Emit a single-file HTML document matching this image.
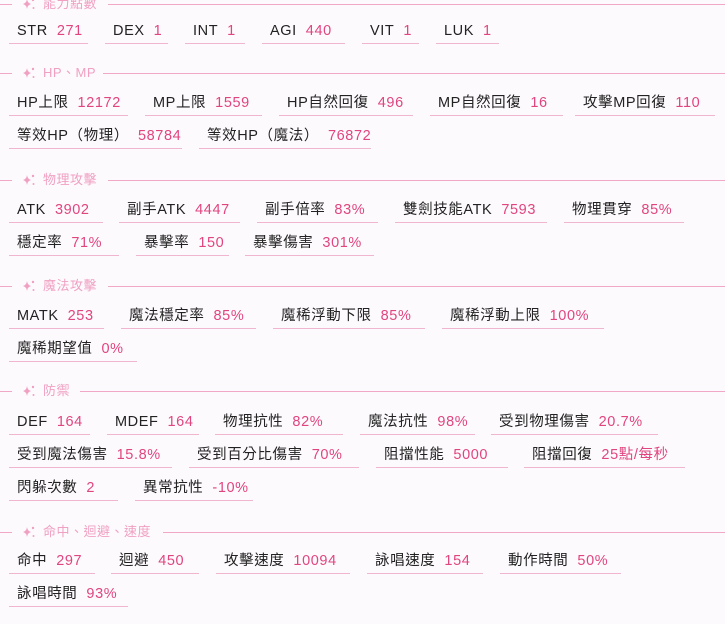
<!DOCTYPE html>
<html><head><meta charset="utf-8">
<style>
body{margin:0;width:725px;height:624px;background:#fdfafd;position:relative;overflow:hidden;font-family:"Liberation Sans","Noto Sans CJK TC",sans-serif;}
.i{position:absolute;height:24px;border-bottom:1px solid #f1b6cf;padding-left:8px;box-sizing:border-box;line-height:22px;font-size:14.5px;white-space:nowrap;color:#222;letter-spacing:.6px}
.i b{font-weight:normal;color:#e0457f;margin-left:9px}
.h{position:absolute;left:0;width:725px;height:1px}
.h .l1{position:absolute;left:0;top:0;width:12px;height:1px;background:#f0a8c6}
.h .l2{position:absolute;top:0;right:0;height:1px;background:#f0a8c6}
.h .ic{position:absolute;left:22px;top:-7px;width:14px;height:14px}
.h .t{position:absolute;left:43px;top:-9px;font-size:13px;line-height:18px;color:#f0a0c2;white-space:nowrap;letter-spacing:.5px}
</style></head><body>

<div class="h" style="top:4px"><div class="l1"></div><svg class="ic" viewBox="0 0 14 14"><path d="M5 2 Q5.5 6 9 7 Q5.5 8 5 12 Q4.5 8 1 7 Q4.5 6 5 2Z" fill="#f0a0c2"/><circle cx="11" cy="3" r="1.2" fill="#f0a0c2"/><circle cx="11.5" cy="11" r="1" fill="#f0a0c2"/></svg><div class="t">能力點數</div><div class="l2" style="left:108px"></div></div>
<div class="i" style="left:9px;top:20px;width:79px">STR<b>271</b></div>
<div class="i" style="left:105px;top:20px;width:63px">DEX<b>1</b></div>
<div class="i" style="left:185px;top:20px;width:60px">INT<b>1</b></div>
<div class="i" style="left:262px;top:20px;width:83px">AGI<b>440</b></div>
<div class="i" style="left:362px;top:20px;width:57px">VIT<b>1</b></div>
<div class="i" style="left:436px;top:20px;width:63px">LUK<b>1</b></div>

<div class="h" style="top:73px"><div class="l1"></div><svg class="ic" viewBox="0 0 14 14"><path d="M5 2 Q5.5 6 9 7 Q5.5 8 5 12 Q4.5 8 1 7 Q4.5 6 5 2Z" fill="#f0a0c2"/><circle cx="11" cy="3" r="1.2" fill="#f0a0c2"/><circle cx="11.5" cy="11" r="1" fill="#f0a0c2"/></svg><div class="t">HP、MP</div><div class="l2" style="left:103px"></div></div>
<div class="i" style="left:9px;top:92px;width:119px">HP上限<b>12172</b></div>
<div class="i" style="left:145px;top:92px;width:117px">MP上限<b>1559</b></div>
<div class="i" style="left:279px;top:92px;width:134px">HP自然回復<b>496</b></div>
<div class="i" style="left:430px;top:92px;width:133px">MP自然回復<b>16</b></div>
<div class="i" style="left:575px;top:92px;width:140px">攻擊MP回復<b>110</b></div>
<div class="i" style="left:9px;top:125px;width:173px">等效HP（物理）<b>58784</b></div>
<div class="i" style="left:199px;top:125px;width:172px">等效HP（魔法）<b>76872</b></div>

<div class="h" style="top:180px"><div class="l1"></div><svg class="ic" viewBox="0 0 14 14"><path d="M5 2 Q5.5 6 9 7 Q5.5 8 5 12 Q4.5 8 1 7 Q4.5 6 5 2Z" fill="#f0a0c2"/><circle cx="11" cy="3" r="1.2" fill="#f0a0c2"/><circle cx="11.5" cy="11" r="1" fill="#f0a0c2"/></svg><div class="t">物理攻擊</div><div class="l2" style="left:108px"></div></div>
<div class="i" style="left:9px;top:199px;width:94px">ATK<b>3902</b></div>
<div class="i" style="left:119px;top:199px;width:121px">副手ATK<b>4447</b></div>
<div class="i" style="left:257px;top:199px;width:121px">副手倍率<b>83%</b></div>
<div class="i" style="left:395px;top:199px;width:152px">雙劍技能ATK<b>7593</b></div>
<div class="i" style="left:564px;top:199px;width:120px">物理貫穿<b>85%</b></div>
<div class="i" style="left:9px;top:232px;width:110px">穩定率<b>71%</b></div>
<div class="i" style="left:136px;top:232px;width:93px">暴擊率<b>150</b></div>
<div class="i" style="left:245px;top:232px;width:129px">暴擊傷害<b>301%</b></div>

<div class="h" style="top:286px"><div class="l1"></div><svg class="ic" viewBox="0 0 14 14"><path d="M5 2 Q5.5 6 9 7 Q5.5 8 5 12 Q4.5 8 1 7 Q4.5 6 5 2Z" fill="#f0a0c2"/><circle cx="11" cy="3" r="1.2" fill="#f0a0c2"/><circle cx="11.5" cy="11" r="1" fill="#f0a0c2"/></svg><div class="t">魔法攻擊</div><div class="l2" style="left:108px"></div></div>
<div class="i" style="left:9px;top:305px;width:95px">MATK<b>253</b></div>
<div class="i" style="left:121px;top:305px;width:135px">魔法穩定率<b>85%</b></div>
<div class="i" style="left:273px;top:305px;width:152px">魔稀浮動下限<b>85%</b></div>
<div class="i" style="left:442px;top:305px;width:162px">魔稀浮動上限<b>100%</b></div>
<div class="i" style="left:9px;top:338px;width:128px">魔稀期望值<b>0%</b></div>

<div class="h" style="top:391px"><div class="l1"></div><svg class="ic" viewBox="0 0 14 14"><path d="M5 2 Q5.5 6 9 7 Q5.5 8 5 12 Q4.5 8 1 7 Q4.5 6 5 2Z" fill="#f0a0c2"/><circle cx="11" cy="3" r="1.2" fill="#f0a0c2"/><circle cx="11.5" cy="11" r="1" fill="#f0a0c2"/></svg><div class="t">防禦</div><div class="l2" style="left:80px"></div></div>
<div class="i" style="left:9px;top:411px;width:81px">DEF<b>164</b></div>
<div class="i" style="left:107px;top:411px;width:92px">MDEF<b>164</b></div>
<div class="i" style="left:215px;top:411px;width:128px">物理抗性<b>82%</b></div>
<div class="i" style="left:360px;top:411px;width:115px">魔法抗性<b>98%</b></div>
<div class="i" style="left:491px;top:411px;width:167px">受到物理傷害<b>20.7%</b></div>
<div class="i" style="left:9px;top:444px;width:163px">受到魔法傷害<b>15.8%</b></div>
<div class="i" style="left:189px;top:444px;width:170px">受到百分比傷害<b>70%</b></div>
<div class="i" style="left:376px;top:444px;width:132px">阻擋性能<b>5000</b></div>
<div class="i" style="left:524px;top:444px;width:161px">阻擋回復<b>25點/每秒</b></div>
<div class="i" style="left:9px;top:477px;width:109px">閃躲次數<b>2</b></div>
<div class="i" style="left:135px;top:477px;width:118px">異常抗性<b>-10%</b></div>

<div class="h" style="top:532px"><div class="l1"></div><svg class="ic" viewBox="0 0 14 14"><path d="M5 2 Q5.5 6 9 7 Q5.5 8 5 12 Q4.5 8 1 7 Q4.5 6 5 2Z" fill="#f0a0c2"/><circle cx="11" cy="3" r="1.2" fill="#f0a0c2"/><circle cx="11.5" cy="11" r="1" fill="#f0a0c2"/></svg><div class="t">命中、迴避、速度</div><div class="l2" style="left:163px"></div></div>
<div class="i" style="left:9px;top:550px;width:86px">命中<b>297</b></div>
<div class="i" style="left:111px;top:550px;width:88px">迴避<b>450</b></div>
<div class="i" style="left:216px;top:550px;width:134px">攻擊速度<b>10094</b></div>
<div class="i" style="left:367px;top:550px;width:116px">詠唱速度<b>154</b></div>
<div class="i" style="left:500px;top:550px;width:121px">動作時間<b>50%</b></div>
<div class="i" style="left:9px;top:583px;width:119px">詠唱時間<b>93%</b></div>

</body></html>
